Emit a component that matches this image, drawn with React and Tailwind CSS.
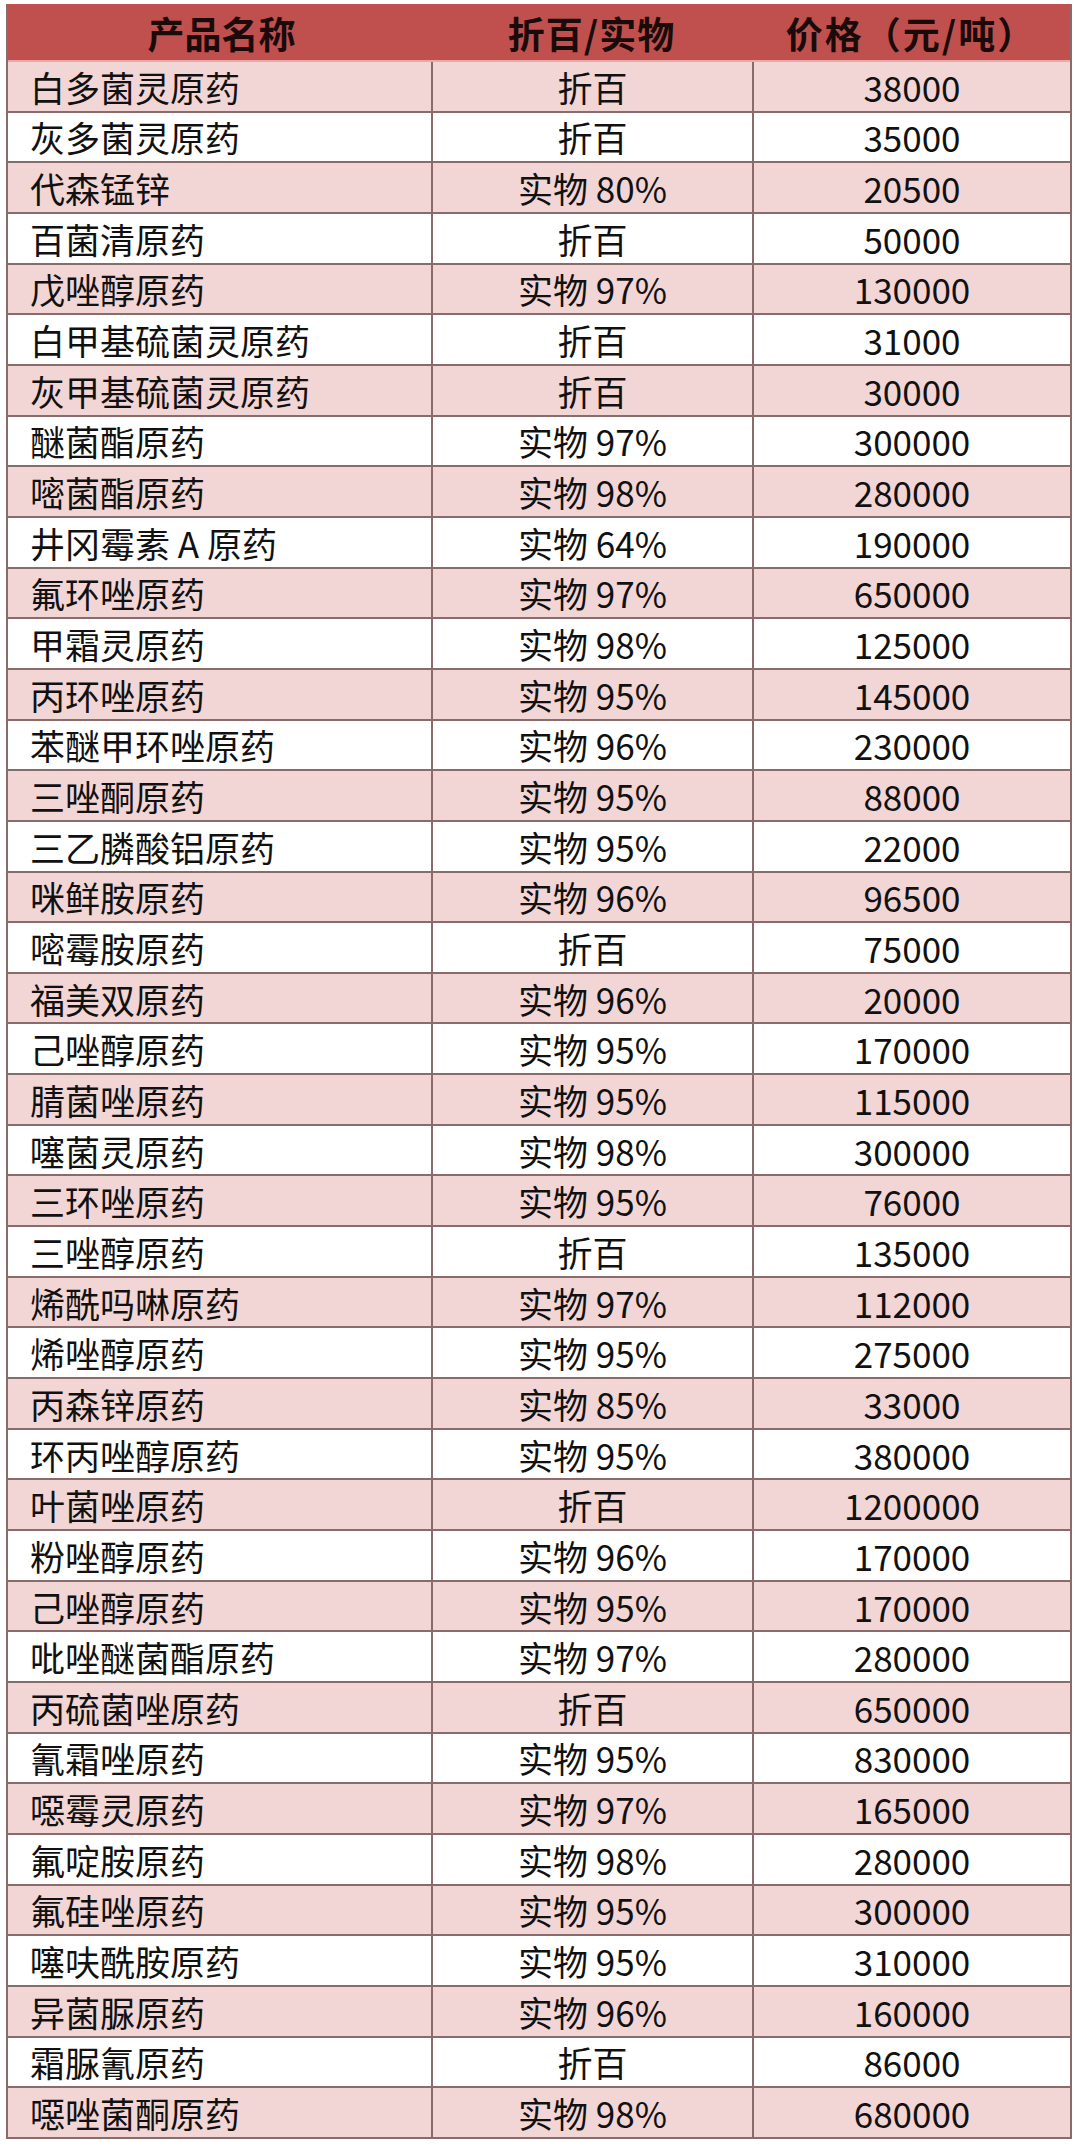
import React from "react";

// price list: product, purity basis, price (yuan / ton)
const rows = [
  ["白多菌灵原药", "折百", "38000"],
  ["灰多菌灵原药", "折百", "35000"],
  ["代森锰锌", "实物 80%", "20500"],
  ["百菌清原药", "折百", "50000"],
  ["戊唑醇原药", "实物 97%", "130000"],
  ["白甲基硫菌灵原药", "折百", "31000"],
  ["灰甲基硫菌灵原药", "折百", "30000"],
  ["醚菌酯原药", "实物 97%", "300000"],
  ["嘧菌酯原药", "实物 98%", "280000"],
  ["井冈霉素 A 原药", "实物 64%", "190000"],
  ["氟环唑原药", "实物 97%", "650000"],
  ["甲霜灵原药", "实物 98%", "125000"],
  ["丙环唑原药", "实物 95%", "145000"],
  ["苯醚甲环唑原药", "实物 96%", "230000"],
  ["三唑酮原药", "实物 95%", "88000"],
  ["三乙膦酸铝原药", "实物 95%", "22000"],
  ["咪鲜胺原药", "实物 96%", "96500"],
  ["嘧霉胺原药", "折百", "75000"],
  ["福美双原药", "实物 96%", "20000"],
  ["己唑醇原药", "实物 95%", "170000"],
  ["腈菌唑原药", "实物 95%", "115000"],
  ["噻菌灵原药", "实物 98%", "300000"],
  ["三环唑原药", "实物 95%", "76000"],
  ["三唑醇原药", "折百", "135000"],
  ["烯酰吗啉原药", "实物 97%", "112000"],
  ["烯唑醇原药", "实物 95%", "275000"],
  ["丙森锌原药", "实物 85%", "33000"],
  ["环丙唑醇原药", "实物 95%", "380000"],
  ["叶菌唑原药", "折百", "1200000"],
  ["粉唑醇原药", "实物 96%", "170000"],
  ["己唑醇原药", "实物 95%", "170000"],
  ["吡唑醚菌酯原药", "实物 97%", "280000"],
  ["丙硫菌唑原药", "折百", "650000"],
  ["氰霜唑原药", "实物 95%", "830000"],
  ["噁霉灵原药", "实物 97%", "165000"],
  ["氟啶胺原药", "实物 98%", "280000"],
  ["氟硅唑原药", "实物 95%", "300000"],
  ["噻呋酰胺原药", "实物 95%", "310000"],
  ["异菌脲原药", "实物 96%", "160000"],
  ["霜脲氰原药", "折百", "86000"],
  ["噁唑菌酮原药", "实物 98%", "680000"],
];

const font = { fontFamily: '"Noto Sans CJK SC", "Noto Sans", sans-serif' };

const App = () => {
  return (
    <div className="w-[1080px] h-[2149px] bg-white pt-[4px] pl-[6px]" style={font}>
      <div className="w-[1066px] border-2 border-[#8a6b6b] border-t-[#c0504d]">
        {/* Header */}
        <div className="grid grid-cols-[423px_321px_318px] h-[54px] bg-[#c0504d] text-[37px] font-bold text-[#1a0a0a] leading-none">
          <div className="flex items-center justify-center pl-[4px]">产品名称</div>
          <div className="flex items-center justify-center tracking-[1px]">折百/实物</div>
          <div className="flex items-center justify-center tracking-[2px]">价格（元/吨）</div>
        </div>

        {/* Rows */}
        {rows.map(([name, kind, price], i) => (
          <div
            key={i}
            className={`grid grid-cols-[423px_321px_318px] h-[50.66px] border-t-2 text-[35px] leading-none text-[#111] ${
              i === 0 ? "border-[#e8a9a8]" : "border-[#8a6b6b]"
            } ${i % 2 === 0 ? "bg-[#f2d5d5]" : "bg-white"}`}
          >
            <div className="flex items-center pl-[22px] whitespace-nowrap">{name}</div>
            <div className="flex items-center justify-center border-l-2 border-[#8a6b6b]">{kind}</div>
            <div className="flex items-center justify-center border-l-2 border-[#8a6b6b]">{price}</div>
          </div>
        ))}
      </div>
    </div>
  );
};

export default App;
